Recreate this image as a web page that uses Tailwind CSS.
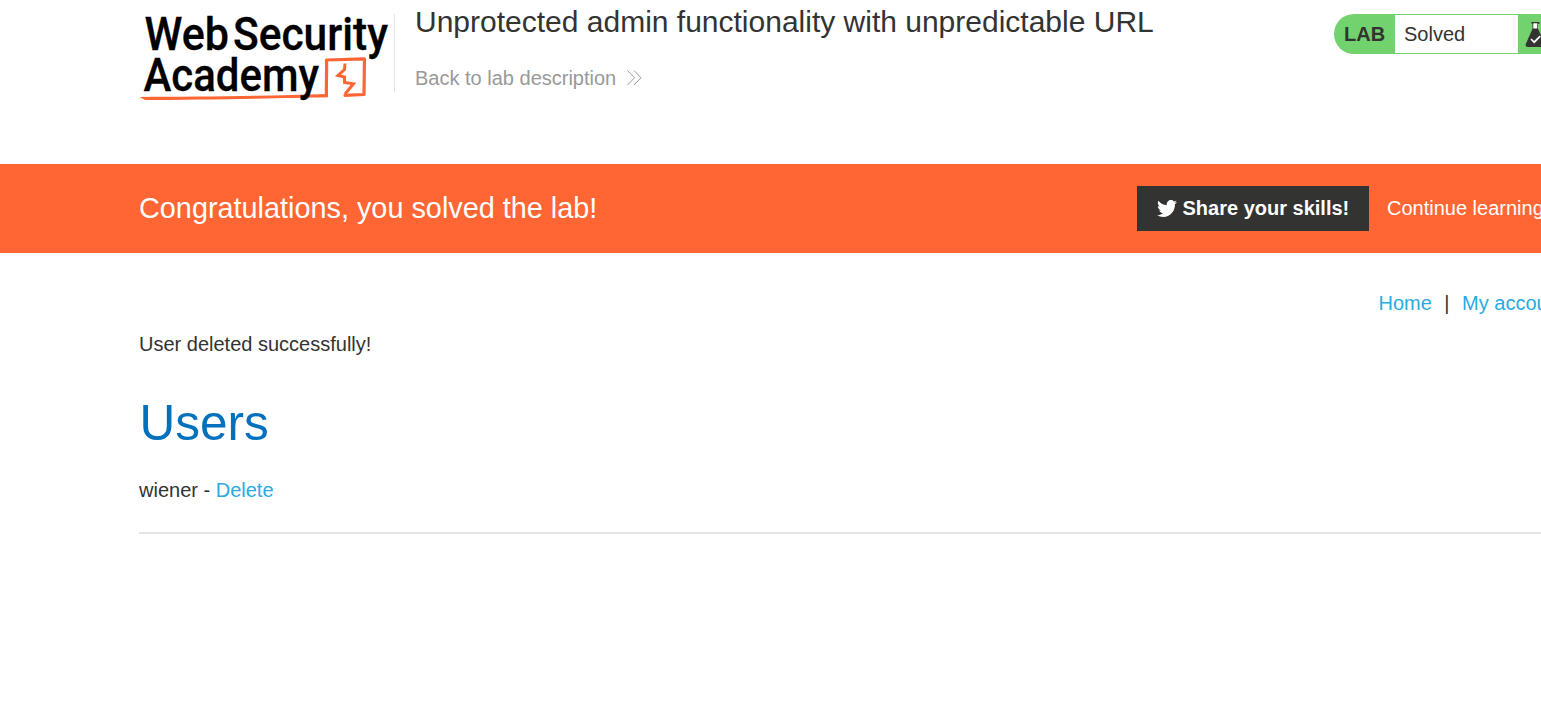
<!DOCTYPE html>
<html lang="en">
<head>
<meta charset="utf-8">
<title>Unprotected admin functionality with unpredictable URL</title>
<script src="https://cdn.jsdelivr.net/npm/@tailwindcss/browser@4"></script>
</head>
<body class="h-[713px] overflow-hidden bg-white font-['Liberation_Sans',Arial,sans-serif] text-[20px] leading-[24px] text-[#333332]">
<div class="w-[1541px] overflow-hidden">
  <header class="flex h-[164px] pl-[139px]">
    <svg class="h-[110px] w-[255px] shrink-0" viewBox="139 0 255 110" role="img" aria-label="Web Security Academy">
      <path fill="none" stroke="#ff6633" stroke-width="3.2" stroke-linejoin="round" stroke-linecap="round" d="M326.500 95.500 C326 84 327 71 326.500 60 L364.500 58.800 L364 94.500 L345 95.300"/>
      <path fill="#ff6633" d="M139.500 97 C200 96.800 270 96 328 94 L328 97.300 C280 98.300 200 99.700 145 100 Z"/>
      <path fill="none" stroke="#ff6633" stroke-width="3" d="M345 63.500 L344.500 69.500 L338 75.500 L344.500 77 L344.500 82.500 L353.500 83.800 L345 94"/>
      <g font-family="Roboto, sans-serif" font-weight="500" font-size="47" fill="#000" stroke="#000" stroke-width=".3">
        <text x="144.500" y="50.300" textLength="84.500" lengthAdjust="spacingAndGlyphs">Web</text>
        <text x="233" y="50.300" textLength="155" lengthAdjust="spacingAndGlyphs">Security</text>
        <text x="143.500" y="91" textLength="175.500" lengthAdjust="spacingAndGlyphs">Academy</text>
      </g>
    </svg>
    <div class="mt-[14px] h-[78px] w-px shrink-0 bg-[#e4e4e4]"></div>
    <div class="ml-[20px] grow">
      <h1 class="mt-[4px] text-[30px] leading-[36px] whitespace-nowrap">Unprotected admin functionality with unpredictable URL</h1>
      <a class="mt-[26px] flex items-center text-[#999999]">Back to lab description
        <svg class="ml-[11px] h-[16px] w-[15px]" viewBox="0 0 15 16" fill="none" stroke="#999" stroke-width="1"><path d="M0.500 0.500 L7.500 7.800 L0.500 15 M7 0.500 L14 7.800 L7 15"/></svg>
      </a>
    </div>
    <div class="mt-[14px] flex h-[40px] w-[207px] shrink-0 overflow-hidden rounded-l-[20px] bg-[#71d26e]">
      <span class="w-[61px] shrink-0 pl-[10px] leading-[41px] font-bold">LAB</span>
      <span class="my-px w-[123px] shrink-0 bg-white pl-[9px] leading-[38px]">Solved</span>
      <svg class="mt-[8px] ml-[7px] h-[25px] w-[22px] shrink-0" viewBox="0 0 22 25"><path fill="#333332" d="M6.500 0h8v1.800h-1.500v5l7.200 15.200q1 3-2 3H2.800q-3 0-2-3L7.500 6.800v-5h-1z"/><path fill="#fff" d="M8.300 1.200h4v5.300h-4z"/><path fill="none" stroke="#fff" stroke-width="1.700" d="M6 17l3.200 3.200 6-6"/></svg>
    </div>
  </header>
  <section class="flex h-[89px] items-center bg-[#ff6633] pl-[139px] text-white">
    <h2 class="w-[998px] shrink-0 pb-[2px] text-[28.83px]">Congratulations, you solved the lab!</h2>
    <a class="flex h-[45px] w-[232px] shrink-0 items-center bg-[#333332] pl-[20px] font-bold whitespace-nowrap">
      <svg class="mr-[5.5px] h-[20px] w-[20px]" viewBox="0 1 24 23" preserveAspectRatio="none" fill="#fff"><path d="M24 4.557c-.883.392-1.832.656-2.828.775 1.017-.609 1.798-1.574 2.165-2.724-.951.564-2.005.974-3.127 1.195-.897-.957-2.178-1.555-3.594-1.555-3.179 0-5.515 2.966-4.797 6.045-4.091-.205-7.719-2.165-10.148-5.144-1.290 2.213-.669 5.108 1.523 6.574-.806-.026-1.566-.247-2.229-.616-.054 2.281 1.581 4.415 3.949 4.890-.693.188-1.452.232-2.224.084.626 1.956 2.444 3.379 4.600 3.419-2.070 1.623-4.678 2.348-7.290 2.040 2.179 1.397 4.768 2.212 7.548 2.212 9.142 0 14.307-7.721 13.995-14.646.962-.695 1.797-1.562 2.457-2.549z"/></svg>
      <span class="pb-[2px]">Share your skills!</span>
    </a>
    <a class="ml-[18px] pb-[2px] whitespace-nowrap">Continue learning</a>
  </section>
  <main class="pl-[139px]">
    <nav class="mt-[38px] ml-[1239.5px] flex whitespace-nowrap text-[#29abe2]"><a>Home</a><span class="mx-[12.5px] text-[#333332]">|</span><a>My account</a></nav>
    <p class="mt-[17px]">User deleted successfully!</p>
    <h1 class="mt-[37px] pl-[0.5px] text-[49.500px] leading-[60px] text-[#0071bc]">Users</h1>
    <p class="mt-[25px]">wiener - <a class="text-[#29abe2]">Delete</a></p>
    <div class="mt-[30px] h-[2px] bg-[#e4e4e4]"></div>
  </main>
</div>
</body>
</html>
